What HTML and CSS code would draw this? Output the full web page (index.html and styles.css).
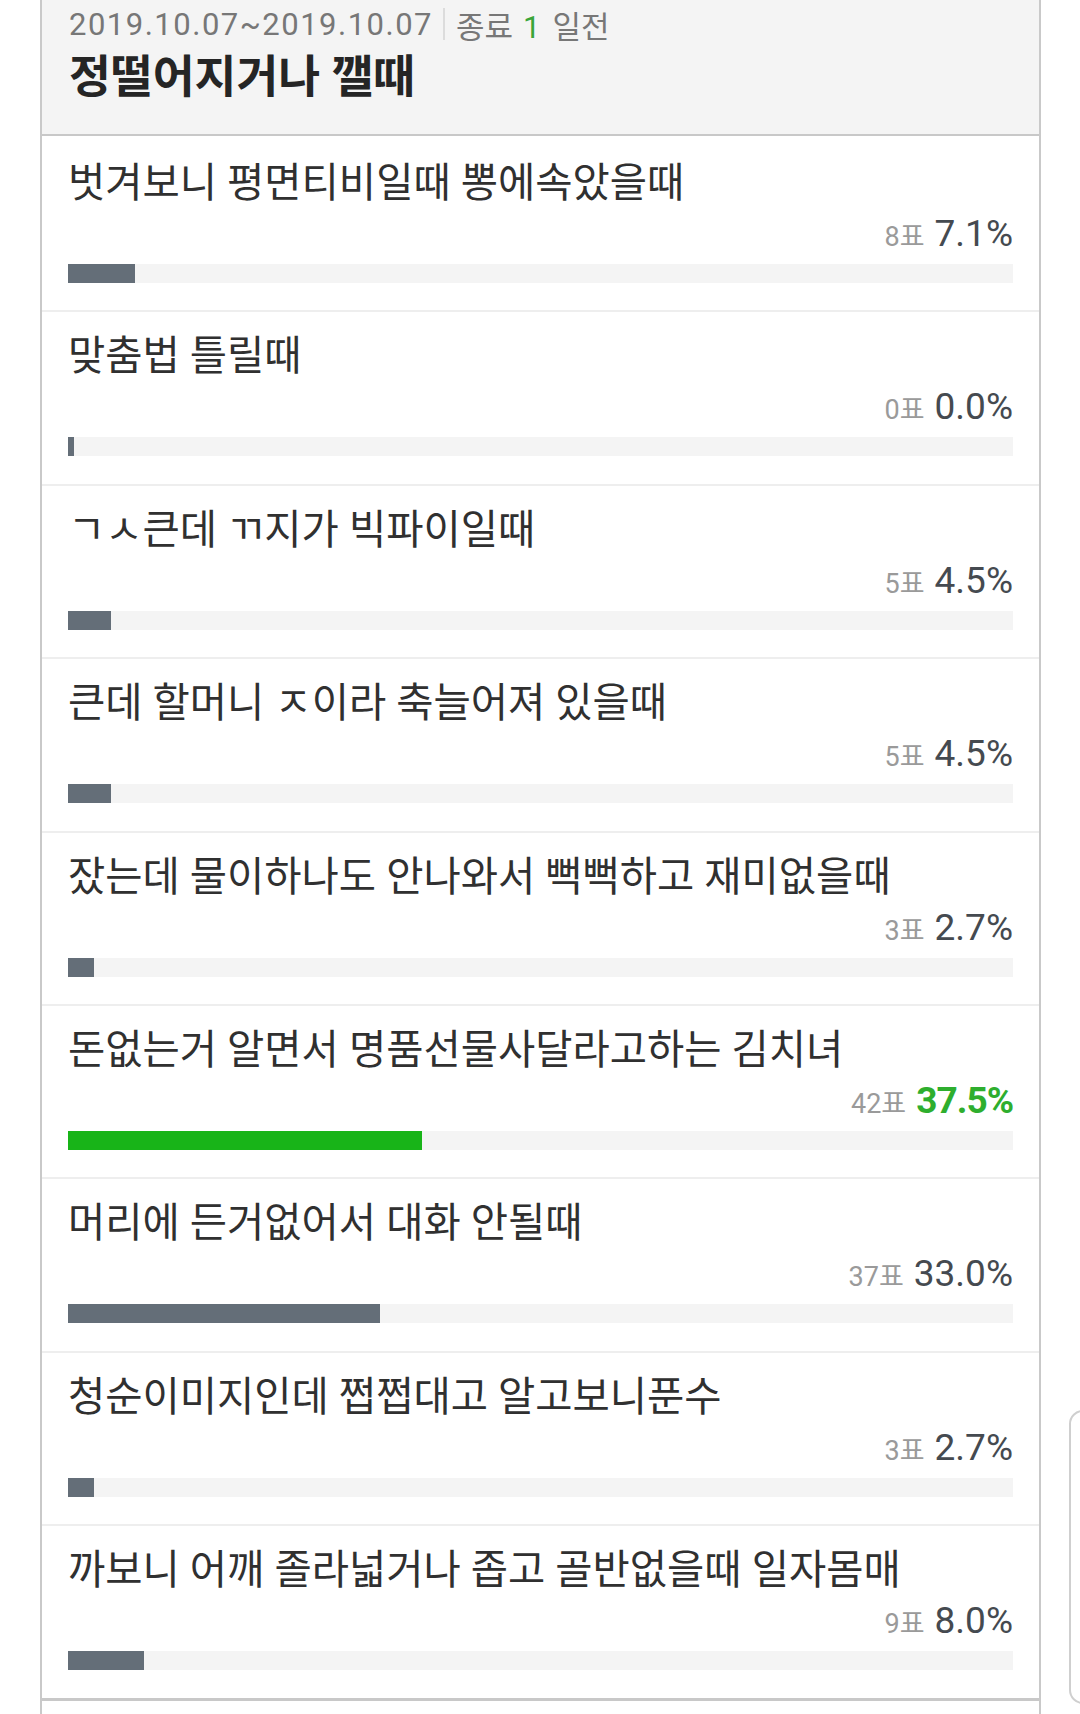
FILE: index.html
```html
<!DOCTYPE html>
<html lang="ko">
<head>
    <meta charset="UTF-8">
    <meta name="viewport" content="width=device-width, initial-scale=1.0">
    <title>투표 결과</title>
    <link rel="stylesheet" href="styles.css">
</head>
<body>
    <div class="poll">
        <div class="poll-head">
            <div class="poll-meta">
                <span class="date">2019.10.07~2019.10.07</span>
                <span class="divider"></span>
                <span>종료<em class="days">1</em>일전</span>
            </div>
            <h1 class="poll-title">정떨어지거나 깰때</h1>
        </div>
        <ul class="poll-list">
            <li class="item">
                <p class="question">벗겨보니 평면티비일때 뽕에속았을때</p>
                <div class="result"><span class="count">8표</span><span class="rate">7.1%</span></div>
                <div class="track"><div class="fill" style="width: 7.1%"></div></div>
            </li>
            <li class="item">
                <p class="question">맞춤법 틀릴때</p>
                <div class="result"><span class="count">0표</span><span class="rate">0.0%</span></div>
                <div class="track"><div class="fill" style="width: 0%"></div></div>
            </li>
            <li class="item">
                <p class="question">ㄱㅅ큰데 ㄲ지가 빅파이일때</p>
                <div class="result"><span class="count">5표</span><span class="rate">4.5%</span></div>
                <div class="track"><div class="fill" style="width: 4.5%"></div></div>
            </li>
            <li class="item">
                <p class="question">큰데 할머니 ㅈ이라 축늘어져 있을때</p>
                <div class="result"><span class="count">5표</span><span class="rate">4.5%</span></div>
                <div class="track"><div class="fill" style="width: 4.5%"></div></div>
            </li>
            <li class="item">
                <p class="question">잤는데 물이하나도 안나와서 뻑뻑하고 재미없을때</p>
                <div class="result"><span class="count">3표</span><span class="rate">2.7%</span></div>
                <div class="track"><div class="fill" style="width: 2.7%"></div></div>
            </li>
            <li class="item top">
                <p class="question">돈없는거 알면서 명품선물사달라고하는 김치녀</p>
                <div class="result"><span class="count">42표</span><span class="rate">37.5%</span></div>
                <div class="track"><div class="fill" style="width: 37.5%"></div></div>
            </li>
            <li class="item">
                <p class="question">머리에 든거없어서 대화 안될때</p>
                <div class="result"><span class="count">37표</span><span class="rate">33.0%</span></div>
                <div class="track"><div class="fill" style="width: 33%"></div></div>
            </li>
            <li class="item">
                <p class="question">청순이미지인데 쩝쩝대고 알고보니푼수</p>
                <div class="result"><span class="count">3표</span><span class="rate">2.7%</span></div>
                <div class="track"><div class="fill" style="width: 2.7%"></div></div>
            </li>
            <li class="item">
                <p class="question">까보니 어깨 졸라넓거나 좁고 골반없을때 일자몸매</p>
                <div class="result"><span class="count">9표</span><span class="rate">8.0%</span></div>
                <div class="track"><div class="fill" style="width: 8%"></div></div>
            </li>
        </ul>
    </div>
    <div class="side-card"></div>
</body>
</html>
```

FILE: styles.css
```css
html, body {
    margin: 0;
    padding: 0;
    background-color: #fff;
}
body {
    display: flex;
    align-items: flex-start;
    height: 1714px;
    padding-left: 40px;
    overflow: hidden;
    font-family: Roboto, "Noto Sans CJK KR", sans-serif;
    color: #333;
}
.poll {
    width: 1001px;
    height: 1714px;
    box-sizing: border-box;
    border-left: 2px solid #c9c9c9;
    border-right: 2px solid #c9c9c9;
    flex-shrink: 0;
    overflow: hidden;
}
/* header */
.poll-head {
    background-color: #f4f4f4;
    padding: 6px 26px 31px 27px;
    border-bottom: 2px solid #c8c8c8;
}
.poll-meta {
    display: flex;
    align-items: center;
    height: 36px;
    font-size: 31px;
    color: #777;
}
.date {
    letter-spacing: 1.5px;
}
.divider {
    width: 2px;
    height: 32px;
    background-color: #dcdcdc;
    margin: 0 11px 0 10px;
}
.days {
    font-style: normal;
    color: #3aa53a;
    margin: 0 12px 0 10px;
}
.poll-title {
    margin: 11px 0 0;
    font-size: 45.5px;
    line-height: 50px;
    font-weight: bold;
    color: #252525;
}
/* options */
.poll-list {
    list-style: none;
    margin: 0;
    padding: 3px 0 0;
    border-bottom: 3px solid #c8c8c8;
}
.item {
    padding: 22px 26px 27.4px;
    border-bottom: 2px solid #eeeeee;
}
.item:last-child {
    border-bottom: none;
}
.question {
    margin: 0;
    font-size: 40.5px;
    line-height: 44px;
    color: #303030;
    white-space: nowrap;
}
.result {
    display: flex;
    justify-content: flex-end;
    align-items: baseline;
    margin-top: 9px;
    height: 40px;
    line-height: 40px;
}
.count {
    font-size: 27px;
    color: #9a9a9a;
    margin-right: 10px;
}
.rate {
    font-size: 37px;
    color: #454a50;
}
.track {
    margin-top: 10px;
    height: 19px;
    background-color: #f4f4f4;
}
.fill {
    height: 100%;
    min-width: 6px;
    background-color: #646e78;
}
.top .rate {
    color: #2eae2e;
    font-weight: bold;
    letter-spacing: -1px;
}
.top .fill {
    background-color: #18b418;
}
/* card peeking in on the right */
.side-card {
    flex-shrink: 0;
    width: 60px;
    height: 290px;
    margin: 1410px 0 0 28px;
    border: 2px solid #cfcfcf;
    border-radius: 14px;
}
```
